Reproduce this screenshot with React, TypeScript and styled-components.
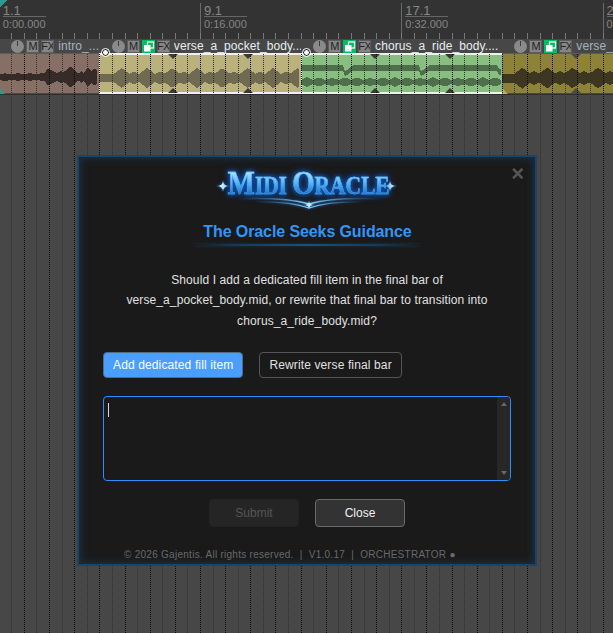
import React from "react";
import styled, { createGlobalStyle } from "styled-components";

const BAR = 25.16;
const HALF = BAR / 2;
const ORIGIN = -1.3;
const SECTION = BAR * 8;

const Global = createGlobalStyle`
  html, body { margin: 0; padding: 0; background: #474747; }
  body { font-family: "Liberation Sans", Arial, sans-serif; overflow: hidden; }
`;

const Page = styled.div`
  position: relative;
  width: 613px;
  height: 633px;
  overflow: hidden;
  background: #474747;
`;

const Ruler = styled.div`
  display: flex;
  height: 39px;
  margin-left: ${ORIGIN}px;
  background: #333333;
`;

const RulerMark = styled.div`
  flex: 0 0 ${SECTION}px;
  box-sizing: border-box;
  height: 36px;
  margin-top: 3px;
  padding-left: 3px;
  border-left: 1px solid #6a6a6a;
`;

const MarkLabel = styled.div`
  display: inline-block;
  color: #868686;
  font-size: 11px;
  line-height: 13px;
`;

const MarkBar = styled.div`
  font-size: 13px;
  line-height: 14px;
  height: 14px;
  padding-top: 1px;
  box-sizing: border-box;
  border-bottom: 1px solid #666;
  margin-bottom: 1px;
`;

const Lane = styled.div`
  display: flex;
  margin-left: ${ORIGIN}px;
  border-bottom: 1px solid #2f2f2f;
`;

const Item = styled.div<{ $span: number }>`
  flex: 0 0 ${(p) => p.$span * HALF}px;
  display: flex;
  flex-direction: column;
  min-width: 0;
`;

const ItemHeader = styled.div`
  display: flex;
  align-items: center;
  gap: 2px;
  height: 14px;
  padding-left: 12.5px;
  background: #474747;
  overflow: hidden;
`;

const Knob = styled.span`
  position: relative;
  flex: 0 0 13px;
  height: 13px;
  border-radius: 50%;
  background: #8a8a8a;
  &::after {
    content: "";
    position: absolute;
    left: 6px;
    top: 1px;
    width: 1px;
    height: 5px;
    background: #3a3a3a;
  }
`;

const ToggleBox = styled.span`
  flex: 0 0 13px;
  width: 13px;
  min-width: 0;
  height: 13px;
  box-sizing: border-box;
  display: flex;
  align-items: center;
  justify-content: center;
  overflow: hidden;
  background: #858585;
  border: 1px solid #5c5c5c;
  color: #242424;
  font-size: 11px;
  line-height: 11px;
  letter-spacing: -0.6px;
`;

const GreenBox = styled.span`
  flex: 0 0 13px;
  height: 13px;
  display: flex;
  background: #00bf63;
`;

const ItemName = styled.span<{ $selected?: boolean }>`
  margin-left: 2px;
  color: ${(p) => (p.$selected ? "#e6ecf0" : "#a4b2bd")};
  font-size: 12px;
  letter-spacing: 0.1px;
  line-height: 14px;
  white-space: nowrap;
  overflow: hidden;
`;

const ItemBody = styled.div<{ $fill: string; $selected?: boolean }>`
  position: relative;
  box-sizing: border-box;
  height: 41px;
  background: ${(p) => p.$fill};
  box-shadow: ${(p) =>
    p.$selected
      ? "inset 0 2px 0 #f0f0f0, inset 0 -2px 0 #f0f0f0, inset 1px 0 0 #f0f0f0"
      : "inset 0 1px 0 #5d5d4f, inset 0 -1px 0 #4a4a3f"};
`;

const Wave = styled.svg`
  position: absolute;
  left: 0;
  top: -53px;
  pointer-events: none;
`;

const Stretch = styled.span<{ $at: number; $up?: boolean; $tone: string }>`
  position: absolute;
  left: ${(p) => p.$at - 5}px;
  ${(p) => (p.$up ? "bottom: 1px;" : "top: 1px;")}
  width: 0;
  height: 0;
  border-left: 5px solid transparent;
  border-right: 5px solid transparent;
  ${(p) => (p.$up ? `border-bottom: 5px solid ${p.$tone};` : `border-top: 5px solid ${p.$tone};`)}
`;

const Corner = styled.span<{ $tone: string }>`
  position: absolute;
  left: 0;
  bottom: 0;
  width: 0;
  height: 0;
  border-left: 6px solid ${(p) => p.$tone};
  border-top: 6px solid transparent;
`;

const FadeHandle = styled.span`
  position: absolute;
  left: 2.5px;
  top: -4px;
  box-sizing: border-box;
  width: 7px;
  height: 7px;
  border-radius: 50%;
  background: #fff;
  border: 1.5px solid #000;
  outline: 0.5px solid #fff;
  z-index: 2;
`;

const Grid = styled.svg`
  position: absolute;
  inset: 0;
  pointer-events: none;
`;

const Modal = styled.div`
  position: absolute;
  left: 77px;
  top: 155px;
  box-sizing: border-box;
  width: 460px;
  height: 411px;
  padding: 0 24px;
  display: flex;
  flex-direction: column;
  align-items: stretch;
  background: #1a1a1a;
  border: 2px solid #1d4464;
  box-shadow: inset 0 0 0 1px #16293a, inset 0 0 7px 2px rgba(24, 66, 102, 0.55);
`;

const CloseX = styled.span`
  position: absolute;
  right: 11px;
  top: 7px;
  color: #565656;
  font-size: 22px;
  font-weight: 700;
  line-height: 20px;
`;

const LogoWrap = styled.div`
  position: relative;
  align-self: center;
  width: 190px;
  height: 48px;
  margin-top: 9px;
  display: flex;
  justify-content: center;
  align-items: flex-start;
`;

const LogoText = styled.div`
  position: relative;
  margin-top: 3px;
  margin-left: 3px;
  font-family: "Liberation Serif", serif;
  font-size: 21.5px;
  font-weight: 700;
  line-height: 28px;
  white-space: nowrap;
  letter-spacing: -0.1px;
  color: transparent;
  background: linear-gradient(180deg, #a6e0ff 18%, #49a8ea 52%, #1468c4 82%);
  -webkit-background-clip: text;
  background-clip: text;
  -webkit-text-stroke: 0.35px #4fb0ee;
  transform: scaleY(1.15);
  filter: drop-shadow(0 0 2px rgba(16, 100, 220, 1)) drop-shadow(0 0 3px rgba(12, 70, 170, 0.8));
`;

const LogoInitial = styled.span`
  font-size: 29px;
`;

const LogoOrnament = styled.svg`
  position: absolute;
  left: 0;
  top: 0;
  filter: drop-shadow(0 0 1.5px #1a78dc);
`;

const Title = styled.h2`
  margin: 8px 0 0 1px;
  text-align: center;
  color: #3096f8;
  font-size: 16px;
  font-weight: 700;
  line-height: 20px;
  letter-spacing: -0.1px;
`;

const TitleRule = styled.div`
  align-self: center;
  width: 226px;
  height: 2px;
  margin-top: 2px;
  background: linear-gradient(90deg, transparent, #143a5a 18%, #1f5078 50%, #143a5a 82%, transparent);
  box-shadow: 0 0 3px rgba(26, 90, 150, 0.45);
`;

const Message = styled.p`
  margin: 24px 0 0;
  height: 61px;
  text-align: center;
  color: #e0e0e0;
  font-size: 12px;
  letter-spacing: 0.115px;
  line-height: 20.4px;
`;

const Choices = styled.div`
  display: flex;
  gap: 16px;
  margin-top: 21px;
`;

const Choice = styled.button<{ $active?: boolean }>`
  height: 26px;
  padding: 0 9px;
  box-sizing: border-box;
  border-radius: 4px;
  border: 1px solid ${(p) => (p.$active ? "#4f6b8a" : "#555")};
  background: ${(p) => (p.$active ? "#4a9eff" : "#1a1a1a")};
  color: ${(p) => (p.$active ? "#fff" : "#e0e0e0")};
  font-family: inherit;
  font-size: 12px;
  letter-spacing: 0.13px;
`;

const InputWrap = styled.div`
  position: relative;
  margin-top: 18px;
  height: 85px;
`;

const Answer = styled.textarea`
  display: block;
  width: 100%;
  height: 100%;
  box-sizing: border-box;
  padding: 6px 4px;
  resize: none;
  overflow: hidden;
  outline: 0;
  background: #1a1a1a;
  color: #e0e0e0;
  border: 1px solid #2f8eff;
  border-radius: 4px;
  font-family: inherit;
  font-size: 12px;
`;

const Caret = styled.span`
  position: absolute;
  left: 5px;
  top: 7px;
  width: 1px;
  height: 14px;
  background: #dcdcdc;
`;

const ScrollTrack = styled.div`
  position: absolute;
  right: 1px;
  top: 1px;
  bottom: 1px;
  width: 13px;
  background: #272727;
  border-radius: 0 3px 3px 0;
  display: flex;
  flex-direction: column;
  justify-content: space-between;
  align-items: center;
  padding: 5px 0;
  box-sizing: border-box;
`;

const ScrollArrow = styled.span<{ $down?: boolean }>`
  width: 0;
  height: 0;
  border-left: 3.5px solid transparent;
  border-right: 3.5px solid transparent;
  ${(p) => (p.$down ? "border-top: 4px solid #666;" : "border-bottom: 4px solid #666;")}
`;

const Actions = styled.div`
  display: flex;
  justify-content: center;
  gap: 16px;
  margin-top: 18px;
`;

const ActionButton = styled.button<{ $disabled?: boolean }>`
  width: 90px;
  height: 28px;
  box-sizing: border-box;
  border-radius: 4px;
  border: 1px solid ${(p) => (p.$disabled ? "#232323" : "#6a6a6a")};
  background: ${(p) => (p.$disabled ? "#252525" : "#333")};
  color: ${(p) => (p.$disabled ? "#565656" : "#f0f0f0")};
  font-family: inherit;
  font-size: 12px;
`;

const Footer = styled.div`
  margin-top: 22px;
  padding-left: 21px;
  color: #696969;
  font-size: 10px;
  letter-spacing: 0.27px;
  line-height: 12px;
  white-space: pre;
`;

type Peak = [number, number, number];

function wavePath(width: number, cy: number, base: number, peaks: Peak[], lift?: (x: number) => number) {
  const up: string[] = [];
  const down: string[] = [];
  for (let x = 0; x <= width; x += 2) {
    let a = base;
    for (const [p, h, w] of peaks) a = Math.max(a, base + h * Math.max(0, 1 - Math.abs(x - p) / w));
    const c = cy + (lift ? lift(x) : 0);
    up.push(`${x},${Math.round(c - a)}`);
    down.unshift(`${x},${Math.round(c + a)}`);
  }
  return `M${up.join(" L")} L${down.join(" L")} Z`;
}

function every(start: number, step: number, end: number, h: number, w: number): Peak[] {
  const out: Peak[] = [];
  for (let x = start; x < end; x += step) out.push([x, h, w]);
  return out;
}

function mixedVerse(offset: number, width: number): Peak[] {
  return [...every(offset, BAR, width, 6, 8), ...every(offset + HALF, BAR, width, 2.5, 5)];
}

const introPeaks: Peak[] = [
  ...every(6, HALF, 46, 1.5, 5),
  [49, 7, 4],
  [52, 4, 8],
  [62, 3, 6],
  [71, 8, 8],
  [82, 3, 5],
  [89, 8, 4],
  [95, 6, 6],
];

const verseWave = wavePath(201, 78, 4, mixedVerse(22.5, 201));
const lastWave = wavePath(112, 78, 4.5, mixedVerse(20, 112));
const introWave = wavePath(99.5, 77, 2.6, introPeaks);
const chorusUpper = wavePath(201, 68, 2.6, [], (x) =>
  x > 43 && x < 52 ? (52 - x) * 0.7 : x > 119 && x < 128 ? (128 - x) * 0.7 : x > 196 ? 4 : 0,
);
const chorusLower = wavePath(201, 82, 2.2, every(6, HALF, 201, 2.4, 6));

const Takes = () => (
  <svg width="13" height="13" viewBox="0 0 13 13">
    <rect x="5.5" y="2" width="6" height="6" fill="none" stroke="#fff" strokeWidth="1.2" />
    <rect x="2" y="5" width="6.5" height="6.5" fill="#fff" />
  </svg>
);

const ribbon = (fill: string, path: string, width: number) => (
  <Wave width={width} height={100} viewBox={`0 0 ${width} 100`} shapeRendering="crispEdges">
    <path d={path} fill={fill} />
  </Wave>
);

const gridLines: React.ReactElement[] = [];
const rulerTicks: React.ReactElement[] = [];
for (let k = 1; k <= 49; k++) {
  const x = Math.round(ORIGIN + k * HALF) + 0.5;
  const strong = k % 2 === 0;
  gridLines.push(
    <line
      key={k}
      x1={x}
      x2={x}
      y1={54}
      y2={633}
      stroke={strong ? "#0c0c0c" : "#303030"}
      strokeWidth={1}
      strokeDasharray="1 1"
    />,
  );
  rulerTicks.push(<line key={`t${k}`} x1={x} x2={x} y1={33} y2={39} stroke="#7a7a7a" strokeWidth={1} />);
}

const Mark = ({ bar, time }: { bar: string; time: string }) => (
  <RulerMark>
    <MarkLabel>
      <MarkBar>{bar}</MarkBar>
      {time}
    </MarkLabel>
  </RulerMark>
);

const Star = ({ x, y, r }: { x: number; y: number; r: number }) => (
  <path
    d={`M${x - r},${y} Q${x},${y} ${x},${y - r * 0.8} Q${x},${y} ${x + r},${y} Q${x},${y} ${x},${y + r * 0.8} Q${x},${y} ${x - r},${y} Z`}
    fill="#c4ecff"
  />
);

export default function App() {
  return (
    <Page>
      <Global />
      <Ruler>
        <Mark bar="1.1" time="0:00.000" />
        <Mark bar="9.1" time="0:16.000" />
        <Mark bar="17.1" time="0:32.000" />
        <Mark bar="25.1" time="0:48.000" />
      </Ruler>
      <Lane>
        <Item $span={8}>
          <ItemHeader>
            <Knob />
            <ToggleBox>M</ToggleBox>
            <ToggleBox>FX</ToggleBox>
            <ItemName>intro_....</ItemName>
          </ItemHeader>
          <ItemBody $fill="#876f66">
            {ribbon("#372b28", introWave, 100)}
            <Corner $tone="#2f9a8c" />
          </ItemBody>
        </Item>
        <Item $span={16}>
          <ItemHeader>
            <Knob />
            <ToggleBox>M</ToggleBox>
            <GreenBox>
              <Takes />
            </GreenBox>
            <ToggleBox>FX</ToggleBox>
            <ItemName $selected>verse_a_pocket_body....</ItemName>
          </ItemHeader>
          <ItemBody $fill="#bbb17b" $selected>
            <FadeHandle />
            {ribbon("#6f6a50", verseWave, 201)}
            <Stretch $at={74} $tone="#3a3a32" />
            <Stretch $at={149} $tone="#3a3a32" />
            <Stretch $at={74} $up $tone="#3a3a32" />
            <Stretch $at={149} $up $tone="#3a3a32" />
          </ItemBody>
        </Item>
        <Item $span={16}>
          <ItemHeader>
            <Knob />
            <ToggleBox>M</ToggleBox>
            <GreenBox>
              <Takes />
            </GreenBox>
            <ToggleBox>FX</ToggleBox>
            <ItemName $selected>chorus_a_ride_body....</ItemName>
          </ItemHeader>
          <ItemBody $fill="#88bf80" $selected>
            <FadeHandle />
            {ribbon("#4f6e4c", chorusUpper, 201)}
            {ribbon("#4f6e4c", chorusLower, 201)}
            <Stretch $at={74} $tone="#3a3a32" />
            <Stretch $at={149} $tone="#3a3a32" />
            <Stretch $at={74} $up $tone="#3a3a32" />
            <Stretch $at={149} $up $tone="#3a3a32" />
          </ItemBody>
        </Item>
        <Item $span={9}>
          <ItemHeader>
            <Knob />
            <ToggleBox>M</ToggleBox>
            <GreenBox>
              <Takes />
            </GreenBox>
            <ToggleBox>FX</ToggleBox>
            <ItemName>verse_a_pocket_body....</ItemName>
          </ItemHeader>
          <ItemBody $fill="#8e8238">
            {ribbon("#3d3621", lastWave, 112)}
            <Corner $tone="#b8ae6c" />
            <Stretch $at={74} $tone="#4d4a45" />
            <Stretch $at={74} $up $tone="#4d4a45" />
          </ItemBody>
        </Item>
      </Lane>
      <Grid width={613} height={633} viewBox="0 0 613 633" shapeRendering="crispEdges">
        <path d="M0,7 L7,0 L0,0 Z" fill="#2f9a8c" />
        {rulerTicks}
        {gridLines}
      </Grid>
      <Modal>
        <CloseX>×</CloseX>
        <LogoWrap>
          <LogoOrnament width={190} height={48} viewBox="0 0 190 48">
            <defs>
              <linearGradient id="swoosh" x1="0" x2="1" y1="0" y2="0">
                <stop offset="0" stopColor="#2b8bd8" stopOpacity="0" />
                <stop offset="0.5" stopColor="#8fd6fa" />
                <stop offset="1" stopColor="#2b8bd8" stopOpacity="0" />
              </linearGradient>
            </defs>
            <path d="M24,33 Q72,31 97,38 Q122,31 170,33" stroke="url(#swoosh)" strokeWidth="1.4" fill="none" />
            <path d="M42,36 Q77,35 97,42 Q117,35 152,36" stroke="url(#swoosh)" strokeWidth="1.2" fill="none" />
            <Star x={11} y={20} r={7} />
            <Star x={178} y={20} r={7} />
            <Star x={97} y={39} r={5.5} />
          </LogoOrnament>
          <LogoText>
            <LogoInitial>M</LogoInitial>IDI <LogoInitial>O</LogoInitial>RACLE
          </LogoText>
        </LogoWrap>
        <Title>The Oracle Seeks Guidance</Title>
        <TitleRule />
        <Message>
          Should I add a dedicated fill item in the final bar of
          <br />
          verse_a_pocket_body.mid, or rewrite that final bar to transition into
          <br />
          chorus_a_ride_body.mid?
        </Message>
        <Choices>
          <Choice $active>Add dedicated fill item</Choice>
          <Choice>Rewrite verse final bar</Choice>
        </Choices>
        <InputWrap>
          <Answer aria-label="Answer" />
          <Caret />
          <ScrollTrack>
            <ScrollArrow />
            <ScrollArrow $down />
          </ScrollTrack>
        </InputWrap>
        <Actions>
          <ActionButton $disabled>Submit</ActionButton>
          <ActionButton>Close</ActionButton>
        </Actions>
        <Footer>© 2026 Gajentis. All rights reserved.  |  V1.0.17  |  ORCHESTRATOR ●</Footer>
      </Modal>
    </Page>
  );
}
